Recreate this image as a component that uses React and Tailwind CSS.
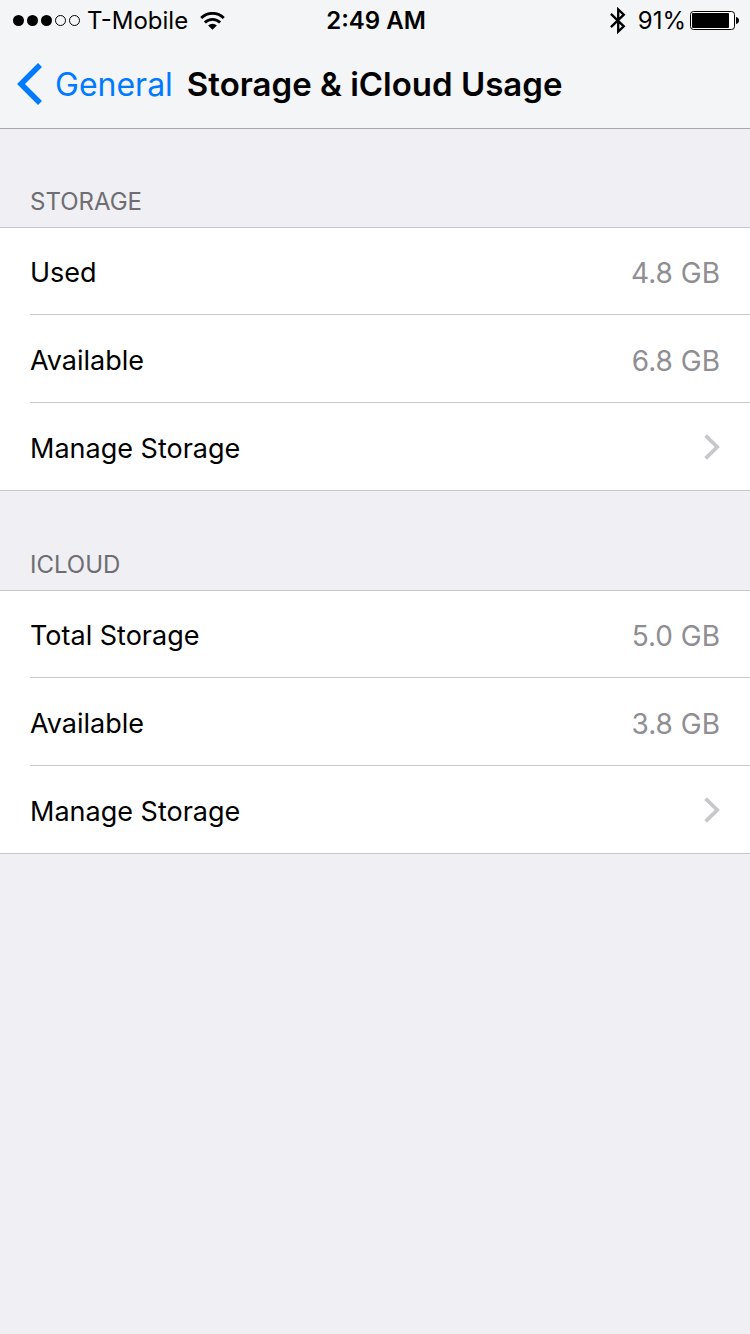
import React from "react";

const sections = [
  {
    id: "storage",
    title: "STORAGE",
    rows: [
      { label: "Used", value: "4.8 GB" },
      { label: "Available", value: "6.8 GB" },
      { label: "Manage Storage", href: "#manage-storage" },
    ],
  },
  {
    id: "icloud",
    title: "ICLOUD",
    rows: [
      { label: "Total Storage", value: "5.0 GB" },
      { label: "Available", value: "3.8 GB" },
      { label: "Manage Storage", href: "#manage-icloud" },
    ],
  },
];

function SignalDots() {
  return (
    <svg className="h-[11px] w-[68px]" viewBox="0 0 68 11" aria-hidden="true">
      <circle cx="5.5" cy="5.5" r="5.5" />
      <circle cx="19.5" cy="5.5" r="5.5" />
      <circle cx="33.5" cy="5.5" r="5.5" />
      <circle cx="47.5" cy="5.5" r="5" fill="none" stroke="#000" strokeWidth="1" />
      <circle cx="61.5" cy="5.5" r="5" fill="none" stroke="#000" strokeWidth="1" />
    </svg>
  );
}

function WifiIcon() {
  return (
    <svg className="h-[18px] w-[25px]" viewBox="0 0 25 18" fill="none" stroke="#000" strokeWidth="2.8" aria-hidden="true">
      <path d="M1.2 6 A16 16 0 0 1 23.8 6" />
      <path d="M4.9 10.5 A10.8 10.8 0 0 1 20.1 10.5" />
      <path d="M12.5 17.8 L8.1 13.5 A6.2 6.2 0 0 1 16.9 13.5 Z" fill="#000" stroke="none" />
    </svg>
  );
}

function BluetoothIcon() {
  return (
    <svg className="h-[27px] w-4" viewBox="0 0 16 27" fill="none" stroke="#000" strokeWidth="2.3" aria-hidden="true">
      <path d="M0.9 6.8 L13.8 19.3 L8.2 24.6 V2.4 L13.8 7.7 L0.9 20.2" />
    </svg>
  );
}

function BatteryIcon() {
  return (
    <svg className="h-[19px] w-[49px]" viewBox="0 0 49 19" aria-hidden="true">
      <rect x="0.5" y="0.5" width="44" height="18" rx="3" fill="#fff" stroke="#000" />
      <rect x="2" y="2" width="37" height="15" rx="1" />
      <path d="M46 6 C48.2 6.3 49 7.6 49 9.5 C49 11.4 48.2 12.7 46 13 Z" />
    </svg>
  );
}

function StatusBar() {
  return (
    <div className="grid h-10 grid-cols-[1fr_auto_1fr] items-center pt-px pr-[11px] pl-[13px] text-2xl leading-8">
      <div className="flex items-center">
        <SignalDots />
        <span className="mr-3 ml-1.5">T-Mobile</span>
        <WifiIcon />
      </div>
      <time className="font-semibold">2:49 AM</time>
      <div className="flex items-center justify-end">
        <BluetoothIcon />
        <span className="mr-1 ml-3">91%</span>
        <BatteryIcon />
      </div>
    </div>
  );
}

function Row({ label, value, href }) {
  const layout = "flex h-full w-full items-center justify-between pr-[30px]";
  if (href) {
    return (
      <a href={href} className={layout}>
        <span className="pt-1">{label}</span>
        <svg className="h-[26px] w-4" viewBox="0 0 16 26" fill="none" stroke="#c7c7cc" strokeWidth="3.8" aria-hidden="true">
          <path d="M1.6 1.6 L13.2 13 L1.6 24.4" />
        </svg>
      </a>
    );
  }
  return (
    <div className={layout}>
      <span className="pt-1">{label}</span>
      <span className="pt-1 text-[28px] text-[#8e8e93]">{value}</span>
    </div>
  );
}

export default function App() {
  return (
    <div className="min-h-screen bg-[#efeff4] font-['Inter','Liberation_Sans',sans-serif] text-black">
      <header className="border-b border-[#a7a7aa] bg-[#f4f5f7]">
        <StatusBar />
        <nav className="flex h-[88px] items-center pl-[17px] leading-10">
          <a href="#general" className="flex items-center text-[32px] text-[#007aff]">
            <svg className="mr-3 h-[42px] w-[26px]" viewBox="0 0 26 42" fill="none" stroke="#007aff" strokeWidth="5.6" aria-hidden="true">
              <path d="M23 2 L4 21 L23 40" />
            </svg>
            <span className="pt-0.5">General</span>
          </a>
          <h1 className="ml-3.5 text-[33px] font-semibold">Storage &amp; iCloud Usage</h1>
        </nav>
      </header>
      <main className="flex flex-col gap-px">
        {sections.map((section) => (
          <section key={section.id} aria-labelledby={section.id}>
            <h2 id={section.id} className="flex h-[98px] items-end pb-[9px] pl-[30px] text-2xl text-[#6d6d72]">
              {section.title}
            </h2>
            <ul className="divide-y divide-[#c8c7cc] border-y border-[#c8c7cc] bg-white pl-[30px] text-[27px] leading-9">
              {section.rows.map((row) => (
                <li key={row.label} className="h-[88px] first:h-[87px] last:h-[87px]">
                  <Row {...row} />
                </li>
              ))}
            </ul>
          </section>
        ))}
      </main>
    </div>
  );
}
